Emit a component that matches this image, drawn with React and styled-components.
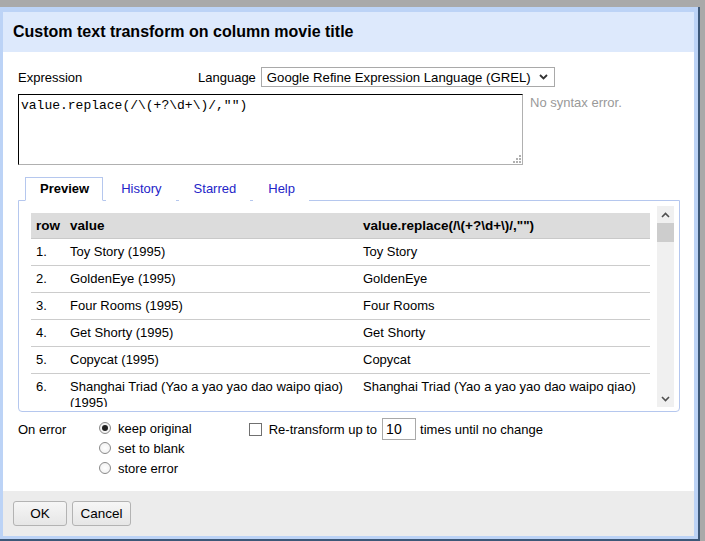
import React from 'react'
import styled, { createGlobalStyle } from 'styled-components'

const Global = createGlobalStyle`
  html, body {
    margin: 0;
    padding: 0;
    background: #a9a9a9;
    font-family: "Liberation Sans", Arial, sans-serif;
    font-size: 13px;
    color: #000;
  }
`

const Page = styled.div`
  width: 705px;
  height: 541px;
  padding-top: 7px;
  box-sizing: border-box;
  overflow: hidden;
`

const Frame = styled.div`
  width: 700px;
  height: 534px;
  box-sizing: border-box;
  background: #bcd3f6;
  padding: 5px 4px 3px 3px;
  border-right: 2px solid #3d5878;
  border-bottom: 2px solid #3d5878;
  display: flex;
  flex-direction: column;
`

const Header = styled.div`
  height: 40px;
  flex: none;
  background: #dde9fc;
  padding-left: 10px;
  display: flex;
  align-items: center;
  font-size: 16px;
  font-weight: bold;
`

const Body = styled.div`
  flex: 1;
  background: #fff;
  padding: 15px 15px 0 15px;
  display: flex;
  flex-direction: column;
`

const TopRow = styled.div`
  display: flex;
  align-items: center;
  height: 20px;
`

const Label = styled.span`
  width: ${p => p.$w || 'auto'};
  flex: none;
`

const Select = styled.div`
  width: 294px;
  height: 20px;
  box-sizing: border-box;
  border: 1px solid #a9a9a9;
  margin-left: 5px;
  padding-left: 5px;
  display: flex;
  align-items: center;
  justify-content: space-between;
  font-size: 13.2px;
  white-space: nowrap;
  overflow: hidden;
  svg { margin-right: 6px; flex: none; }
`

const ExprRow = styled.div`
  display: flex;
  margin-top: 7px;
`

const Code = styled.div`
  position: relative;
  width: 505px;
  height: 71px;
  box-sizing: border-box;
  border-top: 1px solid #000;
  border-left: 1px solid #000;
  border-right: 1px solid #b0b0b0;
  border-bottom: 1px solid #b0b0b0;
  padding: 3px 2px;
  font-family: "Liberation Mono", "Courier New", monospace;
  font-size: 13px;
  white-space: pre;
`

const Grip = styled.svg`
  position: absolute;
  right: 1px;
  bottom: 1px;
`

const Status = styled.div`
  margin-left: 7px;
  padding-top: 1px;
  color: #999;
  font-size: 13px;
`

const Tabs = styled.div`
  display: flex;
  margin-top: 12px;
  padding-left: 7px;
  position: relative;
  z-index: 1;
  margin-bottom: -1px;
`

const Tab = styled.div`
  height: 24px;
  padding: 0 13px 2px 14px;
  box-sizing: border-box;
  margin-right: 3px;
  display: flex;
  align-items: center;
  border: 1px solid ${p => (p.$active ? '#b5c7ee' : 'transparent')};
  border-bottom: 1px solid ${p => (p.$active ? '#fff' : 'transparent')};
  background: #fff;
  color: ${p => (p.$active ? '#000' : '#2424c8')};
  font-weight: ${p => (p.$active ? 'bold' : 'normal')};
`

const Panel = styled.div`
  width: 662px;
  height: 212px;
  box-sizing: border-box;
  border: 1px solid #b5c7ee;
  border-radius: 0 0 4px 4px;
  padding: 5px 5px 4px 6px;
  display: flex;
`

const Viewport = styled.div`
  flex: 1;
  overflow: hidden;
  padding: 7px 7px 0 6px;
`

const Table = styled.table`
  width: 619px;
  border-collapse: collapse;
  table-layout: fixed;
  font-size: 13px;
`

const Col = styled.col`
  width: ${p => p.$w || 'auto'};
`

const Th = styled.th`
  background: #dcdcdc;
  text-align: left;
  font-weight: bold;
  font-size: 13.5px;
  height: 25px;
  padding: 0 5px;
  border-bottom: 1px solid #c9c9c9;
  white-space: nowrap;
`

const Td = styled.td`
  padding: 5px;
  line-height: 16px;
  vertical-align: top;
  border-bottom: 1px solid #cccccc;
`

const Scrollbar = styled.div`
  width: 17px;
  flex: none;
  background: #f0f0f0;
  display: flex;
  flex-direction: column;
`

const Arrow = styled.div`
  height: 17px;
  display: flex;
  align-items: center;
  justify-content: center;
`

const Thumb = styled.div`
  height: 19px;
  background: #cdcdcd;
`

const Track = styled.div`
  flex: 1;
`

const Options = styled.div`
  display: flex;
  margin-top: 6px;
`

const OnErrorLabel = styled.div`
  width: 64px;
  flex: none;
  padding-top: 4px;
  line-height: 15px;
`

const RadioGroup = styled.div`
  display: flex;
  flex-direction: column;
  margin-left: 17px;
`

const RadioRow = styled.label`
  display: flex;
  align-items: center;
  height: 20px;
  gap: 7px;
`

const Radio = styled.span`
  width: 12px;
  height: 12px;
  box-sizing: border-box;
  border-radius: 50%;
  border: 1px solid #8a8a8a;
  background: radial-gradient(circle, #fff 0%, #eee 100%);
  display: flex;
  align-items: center;
  justify-content: center;
  &::after {
    content: '';
    width: 6px;
    height: 6px;
    border-radius: 50%;
    background: ${p => (p.$on ? '#222' : 'transparent')};
  }
`

const Retransform = styled.div`
  display: flex;
  align-items: center;
  height: 22px;
  margin-left: 57px;
`

const Check = styled.span`
  width: 13px;
  height: 13px;
  box-sizing: border-box;
  border: 1px solid #707070;
  background: #fff;
  margin-right: 7px;
`

const NumInput = styled.div`
  width: 34px;
  height: 22px;
  box-sizing: border-box;
  border: 1px solid #a9a9a9;
  margin: 0 4px 0 5px;
  padding-left: 3px;
  display: flex;
  align-items: center;
  font-size: 14px;
`

const Footer = styled.div`
  height: 45px;
  flex: none;
  background: #ececec;
  padding: 10px 0 0 10px;
  box-sizing: border-box;
  display: flex;
  align-items: flex-start;
  gap: 5px;
`

const Button = styled.div`
  width: ${p => p.$w};
  height: 25px;
  box-sizing: border-box;
  border: 1px solid #b3b3b3;
  border-radius: 3px;
  background: linear-gradient(#f6f6f6, #e6e6e6);
  display: flex;
  align-items: center;
  justify-content: center;
  font-size: 13.5px;
`

const rows = [
  ['Toy Story (1995)', 'Toy Story'],
  ['GoldenEye (1995)', 'GoldenEye'],
  ['Four Rooms (1995)', 'Four Rooms'],
  ['Get Shorty (1995)', 'Get Shorty'],
  ['Copycat (1995)', 'Copycat'],
  ['Shanghai Triad (Yao a yao yao dao waipo qiao) (1995)', 'Shanghai Triad (Yao a yao yao dao waipo qiao)'],
  ['Twelve Monkeys (1995)', 'Twelve Monkeys'],
]

const Chevron = ({ up }) => (
  <svg width="9" height="6" viewBox="0 0 9 6">
    <path
      d={up ? 'M1 5 L4.5 1.5 L8 5' : 'M1 1 L4.5 4.5 L8 1'}
      fill="none"
      stroke="#505050"
      strokeWidth="1.6"
    />
  </svg>
)

export default function App() {
  return (
    <Page>
      <Global />
      <Frame>
        <Header>Custom text transform on column movie title</Header>
        <Body>
          <TopRow>
            <Label $w="180px">Expression</Label>
            <Label>Language</Label>
            <Select>
              <span>Google Refine Expression Language (GREL)</span>
              <svg width="9" height="6" viewBox="0 0 9 6">
                <path d="M1 1 L4.5 4.5 L8 1" fill="none" stroke="#333" strokeWidth="1.8" />
              </svg>
            </Select>
          </TopRow>
          <ExprRow>
            <Code>
              {'value.replace(/\\(+?\\d+\\)/,"")'}
              <Grip width="9" height="9" viewBox="0 0 9 9">
                <g fill="#b0b0b0">
                  <rect x="7" y="1" width="2" height="2" />
                  <rect x="4" y="4" width="2" height="2" />
                  <rect x="7" y="4" width="2" height="2" />
                  <rect x="1" y="7" width="2" height="2" />
                  <rect x="4" y="7" width="2" height="2" />
                  <rect x="7" y="7" width="2" height="2" />
                </g>
              </Grip>
            </Code>
            <Status>No syntax error.</Status>
          </ExprRow>
          <Tabs>
            <Tab $active>Preview</Tab>
            <Tab>History</Tab>
            <Tab>Starred</Tab>
            <Tab>Help</Tab>
          </Tabs>
          <Panel>
            <Viewport>
              <Table>
                <colgroup>
                  <Col $w="34px" />
                  <Col $w="293px" />
                  <Col />
                </colgroup>
                <thead>
                  <tr>
                    <Th>row</Th>
                    <Th>value</Th>
                    <Th>{'value.replace(/\\(+?\\d+\\)/,"")'}</Th>
                  </tr>
                </thead>
                <tbody>
                  {rows.map((r, i) => (
                    <tr key={i}>
                      <Td>{i + 1}.</Td>
                      <Td>{r[0]}</Td>
                      <Td>{r[1]}</Td>
                    </tr>
                  ))}
                </tbody>
              </Table>
            </Viewport>
            <Scrollbar>
              <Arrow><Chevron up /></Arrow>
              <Thumb />
              <Track />
              <Arrow><Chevron /></Arrow>
            </Scrollbar>
          </Panel>
          <Options>
            <OnErrorLabel>On error</OnErrorLabel>
            <RadioGroup>
              <RadioRow><Radio $on />keep original</RadioRow>
              <RadioRow><Radio />set to blank</RadioRow>
              <RadioRow><Radio />store error</RadioRow>
            </RadioGroup>
            <Retransform>
              <Check />
              Re-transform up to
              <NumInput>10</NumInput>
              times until no change
            </Retransform>
          </Options>
        </Body>
        <Footer>
          <Button $w="54px">OK</Button>
          <Button $w="59px">Cancel</Button>
        </Footer>
      </Frame>
    </Page>
  )
}
